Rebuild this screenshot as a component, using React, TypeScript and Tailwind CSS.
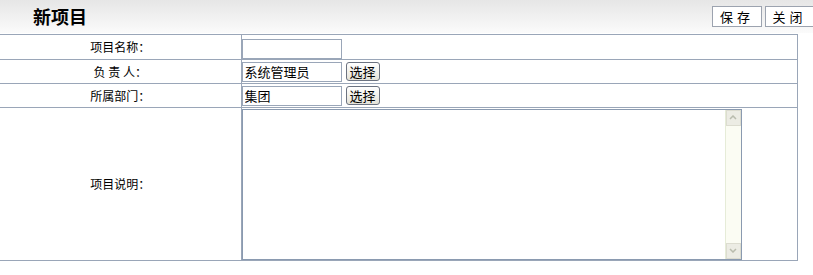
const font = { fontFamily: '"Noto Sans CJK SC", "Liberation Sans", sans-serif' };

function PickButton() {
  return (
    <button className="ml-[4px] h-[19px] w-[34px] rounded-[3px] border border-[#6b7280] bg-gradient-to-b from-white to-[#e4e2d8] text-[13px] leading-none text-black">
      选择
    </button>
  );
}

function Row({ label, height, children }: { label: string; height: string; children: React.ReactNode }) {
  return (
    <tr className={height}>
      <td className="w-[241px] border-b border-r border-[#9aa6b8] text-center text-[12px] text-black">{label}</td>
      <td className="border-b border-[#9aa6b8] p-0">{children}</td>
    </tr>
  );
}

export default function App() {
  return (
    <div className="h-[275px] w-[813px] bg-white" style={font}>
      <div className="flex h-[33px] items-center justify-between bg-gradient-to-b from-[#e6e6e6] to-[#fbfbfb]">
        <h1 className="pl-[33px] text-[18px] font-bold text-black">新项目</h1>
        <div className="flex gap-[3px]">
          <button className="h-[21px] w-[50px] border border-[#9ca3af] bg-white text-[13px] tracking-[4px] text-black">保存</button>
          <button className="h-[21px] w-[48px] border border-r-0 border-[#9ca3af] bg-white text-[13px] tracking-[4px] text-black">关闭</button>
        </div>
      </div>
      <table className="mt-[1px] w-[798px] border-collapse border-t border-r border-[#9aa6b8]">
        <tbody>
          <Row label="项目名称：" height="h-[24px]">
            <input className="h-[20px] w-[100px] border border-[#9aa6b8] bg-white px-1 text-[13px] outline-none" />
          </Row>
          <Row label="负 责 人：" height="h-[24px]">
            <div className="flex items-center">
              <input
                defaultValue="系统管理员"
                className="h-[20px] w-[100px] border border-[#9aa6b8] bg-white px-[2px] text-[13px] text-black outline-none"
              />
              <PickButton />
            </div>
          </Row>
          <Row label="所属部门：" height="h-[24px]">
            <div className="flex items-center">
              <input
                defaultValue="集团"
                className="h-[20px] w-[100px] border border-[#9aa6b8] bg-white px-[2px] text-[13px] text-black outline-none"
              />
              <PickButton />
            </div>
          </Row>
          <Row label="项目说明：" height="h-[153px]">
            <div className="flex h-[151px] w-[500px] border border-[#8a9ab0] bg-white">
              <div className="flex-1" />
              <div className="flex w-[16px] flex-col justify-between border-l border-[#e6ecd8] bg-[#fbfcf3]">
                <div className="flex h-[16px] items-center justify-center border border-[#dcdcd0] bg-[#ecece4]">
                  <svg width="8" height="5" viewBox="0 0 8 5">
                    <path d="M1 4 L4 1 L7 4" stroke="#b9bcae" strokeWidth="1.5" fill="none" />
                  </svg>
                </div>
                <div className="flex h-[16px] items-center justify-center border border-[#dcdcd0] bg-[#ecece4]">
                  <svg width="8" height="5" viewBox="0 0 8 5">
                    <path d="M1 1 L4 4 L7 1" stroke="#b9bcae" strokeWidth="1.5" fill="none" />
                  </svg>
                </div>
              </div>
            </div>
          </Row>
        </tbody>
      </table>
    </div>
  );
}
